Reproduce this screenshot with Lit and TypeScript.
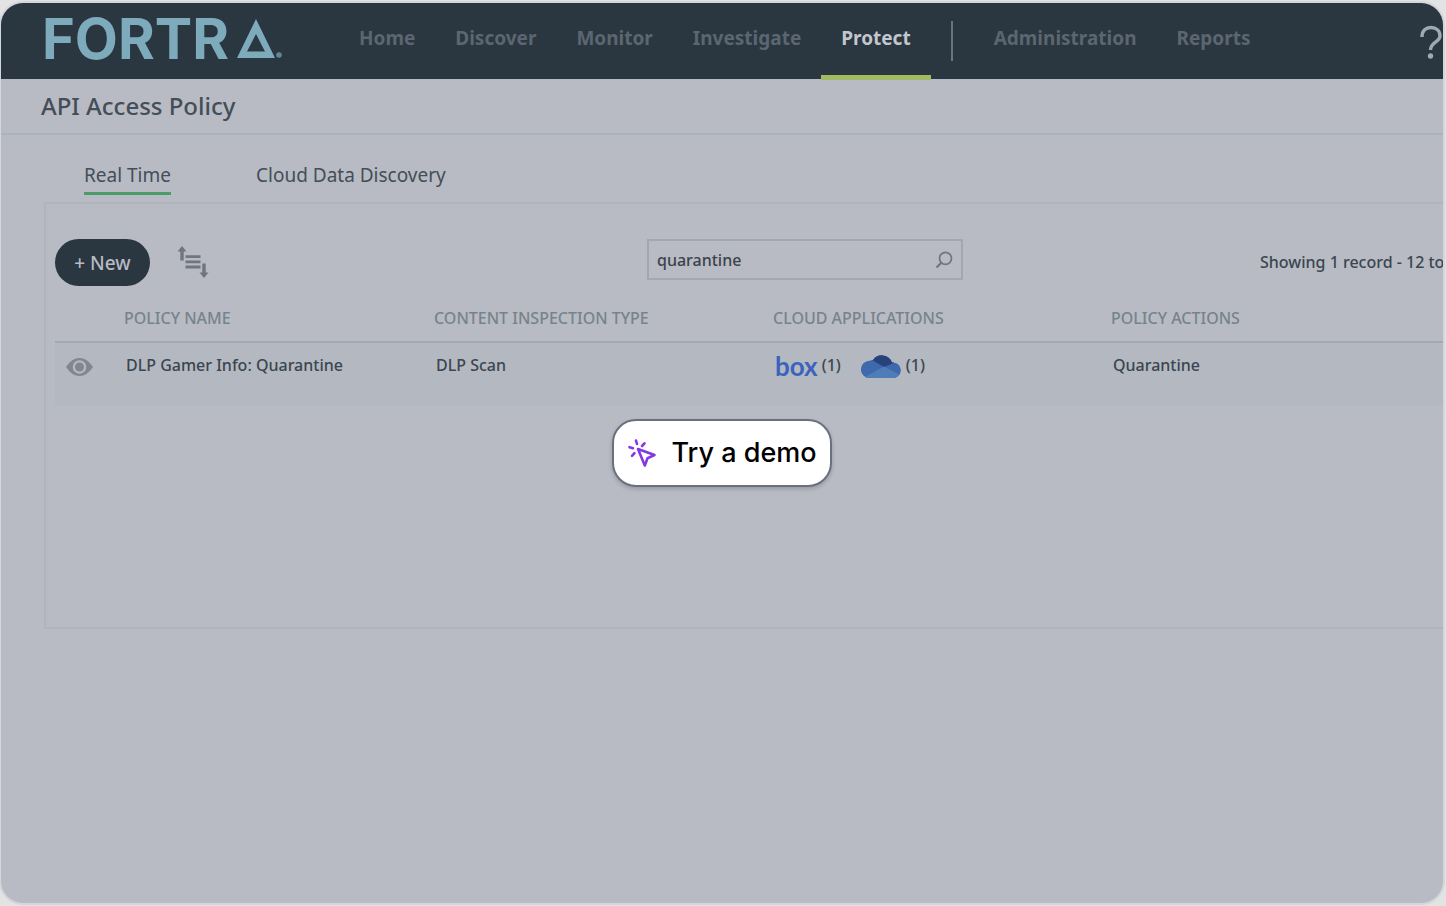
import { LitElement, html, css, svg } from "lit";
import { customElement, state } from "lit/decorators.js";

interface Policy {
  name: string;
  inspection: string;
  action: string;
}

@customElement("app-icon-sort")
class IconSort extends LitElement {
  static styles = css`
    :host { display: block; line-height: 0; }
  `;
  render() {
    return html`<svg width="32" height="34" viewBox="0 0 32 34" aria-hidden="true">
      <g fill="#70757e">
        <path d="M5 0 9.500 5.500H6.700v9H3.300V5.500H0.500z" />
        <path d="M8.500 9.200h15v2.800h-15zM8.500 14.400h15v2.800h-15zM8.500 19.600h15v2.800h-15z" />
        <path d="M25.300 17.500h3.400v9h2.800L27 32 22.500 26.500h2.800z" />
      </g>
    </svg>`;
  }
}

@customElement("app-root")
class AppRoot extends LitElement {
  static styles = css`
    :host {
      display: block;
      font-family: "Noto Sans", "Open Sans", sans-serif;
      color: #3a4650;
      background: #e3e3e4;
    }
    * { box-sizing: border-box; }
    a { color: inherit; text-decoration: none; }
    .page { min-height: 100vh; padding: 3px 3px 3px 1px; display: flex; }
    .frame {
      position: relative;
      flex: 1;
      min-width: 0;
      overflow: hidden;
      border-radius: 22px;
      background: #b8bbc3;
      box-shadow: 0 0 0 2px #d3d6da;
    }
    .header {
      display: flex;
      height: 76px;
      padding-left: 41px;
      background: #2a3741;
      white-space: nowrap;
    }
    .brand {
      display: flex;
      align-items: flex-start;
      gap: 8px;
      width: 297px;
      padding-top: 16px;
      color: #7dabbb;
      font: 700 56px/40px Inter, sans-serif;
    }
    .brand svg { display: block; }
    .nav { display: flex; flex: 1; font-size: 19px; line-height: 26px; font-weight: 700; color: #5b6670; }
    .nav a { padding: 22px 20px 0; height: 77px; }
    .nav a.active { color: #c3c6cd; border-bottom: 5px solid #a2ba62; }
    .divider { width: 2px; height: 40px; margin: 18px 21px 0 20px; background: #6b747d; }
    .help { border: 0; padding: 22px 1px 0 0; background: none; align-self: flex-start; line-height: 0; }
    .title {
      margin: 0;
      padding: 10px 40px;
      border-bottom: 2px solid #abb2bb;
      font-size: 24px;
      line-height: 34px;
      font-weight: 500;
      color: #444e58;
    }
    .tabs { display: flex; gap: 85px; padding: 26px 83px 7px; font-size: 19px; line-height: 28px; color: #444e58; }
    .tabs a { padding-bottom: 3px; border-bottom: 3px solid transparent; }
    .tabs a.active { border-color: #4a9d6b; }
    .panel {
      min-height: 427px;
      margin-left: 43px;
      border: 2px solid #b0b4bc;
      border-right: 0;
      padding: 35px 0 0 9px;
    }
    .toolbar { display: grid; grid-template-columns: 592fr 316px 297fr 183fr; font-size: 16px; font-weight: 500; }
    .toolbar > * { min-width: 0; }
    .actions { display: flex; align-items: center; gap: 27px; }
    .new {
      width: 95px;
      height: 47px;
      border: 0;
      border-radius: 24px;
      background: #2a3741;
      color: #b8bbc3;
      font: 500 19px/26px "Noto Sans", sans-serif;
      padding: 0;
    }
    .sort { border: 0; padding: 0; background: none; }
    .search {
      display: flex;
      align-items: center;
      height: 41px;
      padding: 0 8px;
      border: 2px solid #a3a7af;
    }
    .search input {
      flex: 1;
      min-width: 0;
      border: 0;
      padding: 0;
      outline: 0;
      background: none;
      color: #3c434c;
      font: 500 16px/22px "Noto Sans", sans-serif;
    }
    .count { grid-column: 4; padding-top: 12px; line-height: 22px; white-space: nowrap; }
    table { width: 100%; border-collapse: collapse; table-layout: fixed; text-align: left; margin-top: 16px; }
    .c-eye { width: 69px; }
    .c-name { width: 310px; }
    .c-type { width: 339px; }
    .c-app { width: 338px; }
    th { height: 40px; padding: 0 0 12px; font-size: 16px; line-height: 22px; font-weight: 500; color: #77838c; vertical-align: bottom; }
    thead { border-bottom: 2px solid #a3a8b1; }
    td { height: 64px; padding: 11px 2px; font-size: 16px; line-height: 22px; font-weight: 500; vertical-align: top; background: #b4b8c0; }
    td.eye { padding: 14px 11px; line-height: 0; }
    .apps { display: flex; gap: 20px; }
    .app { display: flex; gap: 4px; }
    .box { color: #3b63be; font: 700 26px/24px Lato, sans-serif; }
    .overlay { position: absolute; inset: 0; display: flex; align-items: center; justify-content: center; }
    .demo {
      display: flex;
      align-items: center;
      gap: 14px;
      height: 68px;
      padding: 0 13px;
      border: 2px solid #6b7080;
      border-radius: 24px;
      background: #fff;
      color: #000;
      font: 500 27px/36px Inter, sans-serif;
      box-shadow: 0 2px 4px rgba(0, 0, 0, 0.18);
    }
  `;

  @state() private query = "quarantine";

  private policies: Policy[] = [
    { name: "DLP Gamer Info: Quarantine", inspection: "DLP Scan", action: "Quarantine" },
  ];

  private onSearch(e: Event) {
    this.query = (e.target as HTMLInputElement).value;
  }

  private cloud() {
    return html`<svg width="41" height="25" viewBox="0 0 41 25" role="img" aria-label="OneDrive">
      <defs>
        <clipPath id="cloud"><path d="M8.500 24A8.500 8.500 0 0 1 8.500 6.800Q10.500 6 12 6A10.800 10.800 0 0 1 31 8.500A7.800 7.800 0 0 1 33 24z" /></clipPath>
      </defs>
      <g clip-path="url(#cloud)">
        ${svg`<rect width="41" height="25" fill="#3e69ad" />
        <path d="M10 0H33V9L23 13 11 6z" fill="#28427a" />
        <path d="M0 25 23 12.500 41 22V25z" fill="#4f7db7" />`}
      </g>
    </svg>`;
  }

  render() {
    return html`
      <div class="page">
        <div class="frame">
          <header class="header">
            <a class="brand" href="#" aria-label="Fortra">
              <span>FORTR</span>
              <svg width="48" height="40" viewBox="0 0 48 40" aria-hidden="true">
                <path fill="#7dabbb" fill-rule="evenodd" d="M19 0 38 39H0zM19 15 10 32.500H28z" />
                <circle cx="42" cy="36" r="2.800" fill="#5f8796" />
              </svg>
            </a>
            <nav class="nav" aria-label="Main">
              <a href="#">Home</a>
              <a href="#">Discover</a>
              <a href="#">Monitor</a>
              <a href="#">Investigate</a>
              <a href="#" class="active" aria-current="page">Protect</a>
              <span class="divider"></span>
              <a href="#">Administration</a>
              <a href="#">Reports</a>
            </nav>
            <button class="help" aria-label="Help">
              <svg width="22" height="34" viewBox="0 0 22 34" aria-hidden="true">
                <path d="M2 12C2 5.500 6 2.500 11 2.500S20 5.500 20 11C20 17 10.500 17 10.500 25" fill="none" stroke="#a0a8b0" stroke-width="3.400" />
                <circle cx="10.500" cy="31" r="2.700" fill="#a0a8b0" />
              </svg>
            </button>
          </header>
          <h1 class="title">API Access Policy</h1>
          <nav class="tabs" aria-label="Policy type">
            <a href="#" class="active">Real Time</a>
            <a href="#">Cloud Data Discovery</a>
          </nav>
          <section class="panel">
            <div class="toolbar">
              <div class="actions">
                <button class="new">+ New</button>
                <button class="sort" aria-label="Sort"><app-icon-sort></app-icon-sort></button>
              </div>
              <label class="search">
                <input type="text" aria-label="Search policies" .value=${this.query} @input=${this.onSearch} />
                <svg width="18" height="18" viewBox="0 0 18 18" aria-hidden="true">
                  <circle cx="10.500" cy="7.300" r="6" fill="none" stroke="#70757e" stroke-width="1.700" />
                  <path d="M6.300 11.800 1.500 16.500" stroke="#70757e" stroke-width="2.200" />
                </svg>
              </label>
              <span class="count">Showing 1 record - 12 to</span>
            </div>
            <table>
              <colgroup>
                <col class="c-eye" /><col class="c-name" /><col class="c-type" /><col class="c-app" /><col />
              </colgroup>
              <thead>
                <tr>
                  <th></th>
                  <th>POLICY NAME</th>
                  <th>CONTENT INSPECTION TYPE</th>
                  <th>CLOUD APPLICATIONS</th>
                  <th>POLICY ACTIONS</th>
                </tr>
              </thead>
              <tbody>
                ${this.policies.map(
                  (p) => html`<tr>
                    <td class="eye">
                      <svg width="27" height="20" viewBox="0 0 27 20" role="img" aria-label="View">
                        <path fill="#81868f" fill-rule="evenodd" d="M0 10Q6 1 13.500 1T27 10Q21 19 13.500 19T0 10zM13.500 3.200a6.800 6.800 0 1 0 0 13.600a6.800 6.800 0 1 0 0-13.600z" />
                        <circle cx="13.500" cy="10" r="4.500" fill="#81868f" />
                      </svg>
                    </td>
                    <td>${p.name}</td>
                    <td>${p.inspection}</td>
                    <td>
                      <div class="apps">
                        <span class="app"><span class="box">box</span>(1)</span>
                        <span class="app">${this.cloud()}(1)</span>
                      </div>
                    </td>
                    <td>${p.action}</td>
                  </tr>`
                )}
              </tbody>
            </table>
          </section>
          <div class="overlay">
            <button class="demo">
              <svg width="30" height="30" viewBox="0 0 30 30" fill="none" stroke="#8338e0" stroke-width="2.600" stroke-linecap="round" stroke-linejoin="round" aria-hidden="true">
                <path d="M11 11 27.500 17 20.500 20.200 17.800 27.500z" />
                <path d="M9 2.500 10 6M2.500 9.200 6 10.200M17.500 5.300 15 8M5 17.800 7.500 15.200" />
              </svg>
              <span>Try a demo</span>
            </button>
          </div>
        </div>
      </div>
    `;
  }
}
